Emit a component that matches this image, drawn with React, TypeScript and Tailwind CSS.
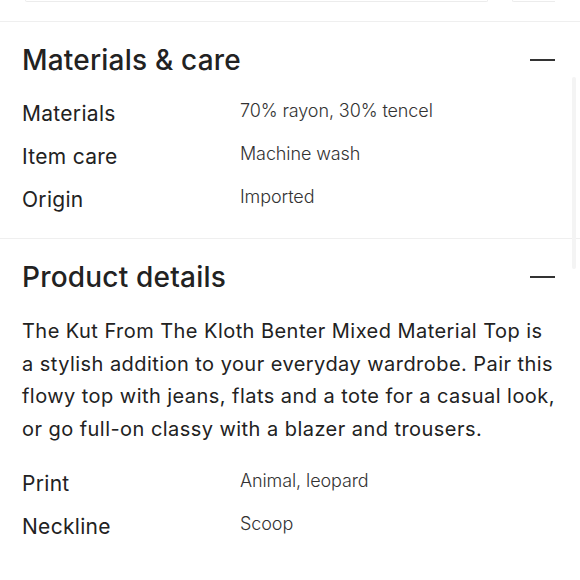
const font = { fontFamily: "Inter, 'Liberation Sans', sans-serif" };

type Spec = { label: string; value: string };

const materials: Spec[] = [
  { label: "Materials", value: "70% rayon, 30% tencel" },
  { label: "Item care", value: "Machine wash" },
  { label: "Origin", value: "Imported" },
];

const details: Spec[] = [
  { label: "Print", value: "Animal, leopard" },
  { label: "Neckline", value: "Scoop" },
];

function Collapse() {
  return <span className="block h-[2px] w-[25px] bg-[#333]" />;
}

function SpecRows({ rows }: { rows: Spec[] }) {
  return (
    <div className="flex flex-col">
      {rows.map((r) => (
        <div key={r.label} className="grid h-[43px] grid-cols-[218px_1fr] items-center">
          <span className="text-[21px] tracking-[0.3px] text-[#222]">{r.label}</span>
          <span className="-mt-[6px] text-[18px] font-light tracking-[-0.1px] text-[#333]">{r.value}</span>
        </div>
      ))}
    </div>
  );
}

function SectionHead({ title }: { title: string }) {
  return (
    <div className="flex items-center justify-between">
      <h2 className="text-[28px] font-medium leading-[36px] tracking-[0.2px] text-[#222]">{title}</h2>
      <div className="pr-[25px]">
        <Collapse />
      </div>
    </div>
  );
}

export default function App() {
  return (
    <div className="relative h-[580px] w-[580px] overflow-hidden bg-white" style={font}>
      <div className="flex h-[22px] gap-[24px] border-b border-[#efefef] px-[25px]">
        <div className="h-[2px] w-[463px] rounded-b-xl border border-t-0 border-[#ececec]" />
        <div className="h-[2px] flex-1 rounded-bl-xl border border-t-0 border-r-0 border-[#ececec]" />
      </div>

      <section className="border-b border-[#efefef] pb-[17px] pl-[22px] pt-[20px]">
        <SectionHead title="Materials & care" />
        <div className="mt-[14px]">
          <SpecRows rows={materials} />
        </div>
      </section>

      <section className="pl-[22px] pt-[20px]">
        <SectionHead title="Product details" />
        <p className="mt-[20px] pr-[24px] text-[20px] leading-[32.5px] tracking-[0.45px] text-[#222]">
          The Kut From The Kloth Benter Mixed Material Top is a stylish addition to your everyday
          wardrobe. Pair this flowy top with jeans, flats and a tote for a casual look, or go
          full-on classy with a blazer and trousers.
        </p>
        <div className="mt-[17px]">
          <SpecRows rows={details} />
        </div>
      </section>

      <div className="absolute right-[4px] top-[77px] h-[192px] w-[4px] rounded bg-[#f4f4f4]" />
    </div>
  );
}
